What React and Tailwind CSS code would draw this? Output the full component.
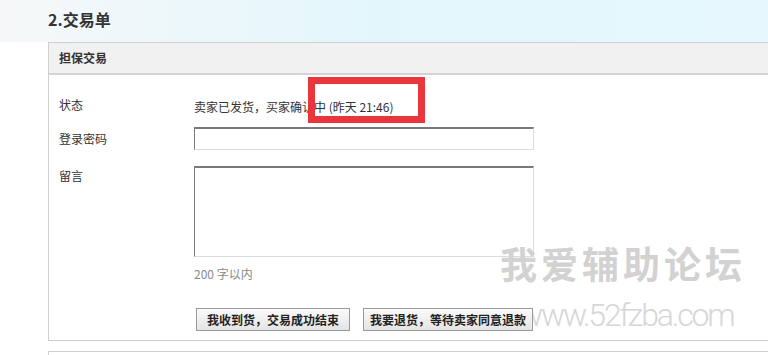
import React from "react";

const font = "font-['Microsoft_YaHei','Noto_Sans_CJK_SC',sans-serif]";

const Row = ({ label, children, className = "" }) => (
  <div className={`flex ${className}`}>
    <div className="w-[145px] shrink-0 pl-[10px] text-[12px] text-[#333]">{label}</div>
    <div className="flex-1">{children}</div>
  </div>
);

export default function App() {
  return (
    <div className={`relative h-[355px] w-[768px] overflow-hidden bg-white ${font}`}>
      {/* 顶部渐变标题区 */}
      <div className="h-[42px] bg-gradient-to-r from-[#f6f8f9] via-[#e2f6fc] to-[#e6f8fd] pl-[48px] pt-[9px]">
        <h1 className="text-[16px] font-bold leading-[20px] text-[#333]">2.交易单</h1>
      </div>

      {/* 担保交易面板 */}
      <div className="ml-[48px] h-[299px] border-l border-t border-b border-[#cfcfcf]">
        <div className="flex h-[32px] items-center border-b-2 border-[#d3d3d3] bg-[#f2f1f1] pl-[10px] text-[12px] font-bold text-[#333]">
          担保交易
        </div>

        <Row label="状态" className="mt-[21px] leading-[18px]">
          <span className="text-[12px] text-[#333]">卖家已发货，买家确认中 (昨天 21:46)</span>
        </Row>

        <Row label="登录密码" className="mt-[11px] leading-[23px]">
          <div className="h-[23px] w-[340px] border border-t-2 border-[#dcdcdc] border-l-[#7a7a7a] border-t-[#7a7a7a] bg-white" />
        </Row>

        <Row label="留言" className="mt-[16px] leading-[20px]">
          <div className="h-[91px] w-[340px] border border-t-2 border-[#dcdcdc] border-l-[#7a7a7a] border-t-[#7a7a7a] bg-white" />
          <div className="mt-[8px] text-[12px] leading-[18px] text-[#8a8a8a]">200 字以内</div>
        </Row>

        <div className="relative z-10 ml-[147px] mt-[25px] flex gap-[13px]">
          <button className="h-[23px] w-[154px] border border-[#9a9a9a] bg-gradient-to-b from-[#fbfbfb] to-[#e4e4e4] text-[12px] font-bold text-[#222]">
            我收到货，交易成功结束
          </button>
          <button className="h-[23px] w-[170px] border border-[#9a9a9a] bg-gradient-to-b from-[#fbfbfb] to-[#e4e4e4] text-[12px] font-bold text-[#222]">
            我要退货，等待卖家同意退款
          </button>
        </div>
      </div>

      {/* 下一个面板顶边 */}
      <div className="ml-[48px] mt-[10px] h-[10px] border-l border-t border-[#cfcfcf]" />

      {/* 红框标注 */}
      <div className="pointer-events-none absolute left-[308px] top-[77px] h-[46px] w-[117px] border-[7px] border-[#e8363c]" />

      {/* 水印 */}
      <div className="pointer-events-none absolute left-[500px] top-[241px] text-[37px] font-bold leading-[44px] tracking-[4px] text-[#d2d2d2]">
        我爱辅助论坛
      </div>
      <div className="pointer-events-none absolute left-[519px] top-[295px] font-['Roboto',sans-serif] text-[32px] font-light leading-[40px] tracking-[-2.2px] text-[#d6d6d6]">
        www.52fzba.com
      </div>
    </div>
  );
}
